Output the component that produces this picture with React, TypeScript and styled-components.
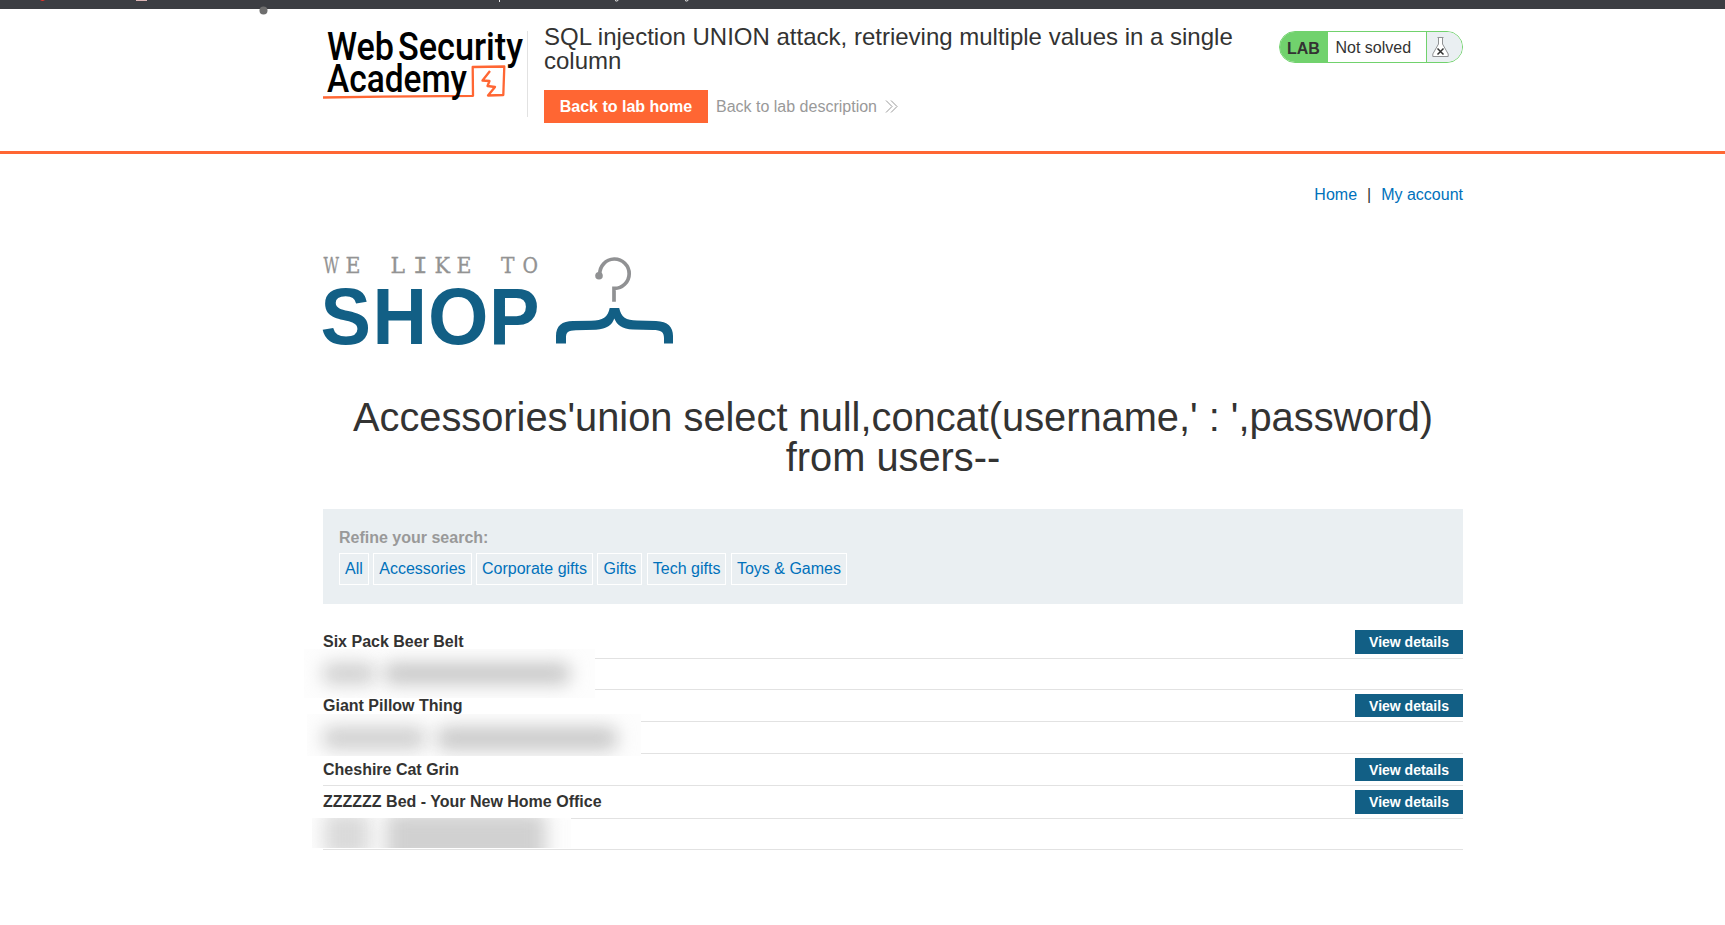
import React from 'react';
import styled, { createGlobalStyle } from 'styled-components';

const GlobalStyle = createGlobalStyle`
  * { box-sizing: border-box; }
  body {
    margin: 0;
    background: #fff;
    color: #333332;
    font-family: 'Liberation Sans', Arial, Helvetica, sans-serif;
    font-size: 16px;
  }
  #root { height: 925px; overflow: hidden; }
  a { text-decoration: none; }
  h1, h2 { margin: 0; font-weight: 400; }
`;

const BrowserStrip = styled.div`
  position: relative;
  height: 9px;
  background: #3c3e43;
`;

const StripSvg = styled.svg`
  display: block;
  overflow: visible;
`;

const Container = styled.div`
  width: 1140px;
  margin-left: 323px;
`;

const Header = styled.header`
  height: 145px;
  border-bottom: 3px solid #ff6633;
`;

const HeaderRow = styled(Container)`
  display: flex;
  align-items: flex-start;
  padding-top: 16px;
`;

const LogoCell = styled.div`
  width: 205px;
  height: 86px;
  margin-top: 6px;
  border-right: 1px solid #e2e2e2;
`;

const AcademySvg = styled.svg`
  display: block;
  overflow: visible;
`;

const TitleCell = styled.div`
  width: 720px;
  padding-left: 16px;
`;

const LabTitle = styled.h2`
  font-size: 24px;
  line-height: 24px;
`;

const Actions = styled.div`
  display: flex;
  align-items: center;
  gap: 8px;
  margin-top: 17px;
`;

const HomeButton = styled.a`
  width: 164px;
  height: 33px;
  line-height: 33px;
  text-align: center;
  background: #ff6633;
  color: #fff;
  font-weight: 700;
`;

const DescriptionLink = styled.a`
  display: flex;
  align-items: center;
  gap: 8px;
  color: #999;
`;

const StatusPill = styled.div`
  display: flex;
  width: 184px;
  height: 32px;
  margin: 6px 0 0 auto;
  border: 1px solid #71d26d;
  border-radius: 16px;
  overflow: hidden;
  line-height: 30px;
`;

const PillLabel = styled.span`
  width: 48px;
  padding: 2px 0 0 7px;
  background: #71d26d;
  font-weight: 700;
`;

const PillState = styled.span`
  flex: 1;
  padding: 1px 0 0 7.5px;
`;

const PillIcon = styled.span`
  width: 36px;
  padding: 5px 0 0 5px;
  border-left: 1px solid #71d26d;
  background: #eaeff2;
  line-height: 0;
`;

const Nav = styled.nav`
  display: flex;
  justify-content: flex-end;
  gap: 10px;
  padding-top: 31px;
  line-height: 20px;
`;

const NavLink = styled.a`
  color: #0071bb;
`;

const ShopLogo = styled.svg`
  display: block;
  margin-top: 51px;
  overflow: visible;
`;

const PageTitle = styled.h1`
  margin-top: 51px;
  font-size: 39.8px;
  line-height: 40px;
  text-align: center;
`;

const Filters = styled.section`
  height: 95px;
  margin-top: 32px;
  padding: 19px 16px 0;
  background: #eaeff2;
`;

const FilterLabel = styled.div`
  line-height: 20px;
  color: #999;
  font-weight: 700;
`;

const TagList = styled.div`
  display: flex;
  gap: 4.5px;
  margin-top: 5px;
`;

const Tag = styled.a`
  height: 32px;
  padding: 0 5px;
  border: 1px solid #fff;
  line-height: 30px;
  color: #0071bb;
`;

const Results = styled.div`
  margin-top: 22px;
`;

const Row = styled.div<{ $height: number }>`
  position: relative;
  display: flex;
  align-items: flex-start;
  justify-content: space-between;
  height: ${(p) => p.$height}px;
  padding-top: 4px;
  border-bottom: 1px solid #e2e2e2;
`;

const ItemName = styled.span`
  line-height: 24px;
  font-weight: 700;
`;

const DetailsButton = styled.a<{ $height: number }>`
  width: 108px;
  height: ${(p) => p.$height}px;
  line-height: 24px;
  background: #125f85;
  color: #fff;
  font-size: 14px;
  font-weight: 700;
  text-align: center;
`;

const Redaction = styled.div<{ $x: number; $y: number; $w: number; $h: number }>`
  position: absolute;
  z-index: 1;
  left: ${(p) => p.$x}px;
  top: ${(p) => p.$y}px;
  width: ${(p) => p.$w}px;
  height: ${(p) => p.$h}px;
  overflow: hidden;
  background: #fdfdfd;
`;

const Smudge = styled.i<{ $x: number; $y: number; $w: number; $h: number; $c: string }>`
  position: absolute;
  left: ${(p) => p.$x}px;
  top: ${(p) => p.$y}px;
  width: ${(p) => p.$w}px;
  height: ${(p) => p.$h}px;
  border-radius: 8px;
  background: ${(p) => p.$c};
  filter: blur(9px);
`;

type Blot = { x: number; y: number; w: number; h: number; c: string };
type Mask = { x: number; y: number; w: number; h: number; blots: Blot[] };
type Item = { name?: string; height: number; button?: number; mask?: Mask };

const items: Item[] = [
  { name: 'Six Pack Beer Belt', height: 33, button: 24 },
  {
    height: 31,
    mask: {
      x: -19, y: -10, w: 291, h: 49,
      blots: [
        { x: 19, y: 14, w: 52, h: 21, c: '#cecece' },
        { x: 80, y: 14, w: 186, h: 21, c: '#c6c6c6' },
      ],
    },
  },
  { name: 'Giant Pillow Thing', height: 32, button: 23 },
  {
    height: 32,
    mask: {
      x: -16, y: -8, w: 334, h: 42,
      blots: [
        { x: 16, y: 13, w: 102, h: 22, c: '#cecece' },
        { x: 130, y: 13, w: 180, h: 23, c: '#c8c8c8' },
      ],
    },
  },
  { name: 'Cheshire Cat Grin', height: 32, button: 23 },
  { name: 'ZZZZZZ Bed - Your New Home Office', height: 33, button: 24 },
  {
    height: 31,
    mask: {
      x: -11, y: -1, w: 259, h: 30,
      blots: [
        { x: 12, y: -6, w: 46, h: 46, c: '#dadada' },
        { x: 74, y: -6, w: 160, h: 54, c: '#d1d1d1' },
      ],
    },
  },
];

const tags = ['All', 'Accessories', 'Corporate gifts', 'Gifts', 'Tech gifts', 'Toys & Games'];

const AcademyLogo = () => (
  <AcademySvg width="202" height="74" viewBox="0 0 202 74">
    <path
      d="M0 66.500 L60 65.600 L150 64.800 L149.700 36 L181.300 35.500 L180.300 64 L165 64.500 L172 56 L164.500 55 L166.500 50 L159.500 49.500 L167 40"
      fill="none"
      stroke="#ff6633"
      strokeWidth="2.300"
      strokeLinejoin="round"
    />
    <g fontFamily="Roboto, sans-serif" fontWeight="500" fontSize="38.5" fill="#000">
      <text x="4" y="29" textLength="67" lengthAdjust="spacingAndGlyphs">Web</text>
      <text x="75" y="29" textLength="125" lengthAdjust="spacingAndGlyphs">Security</text>
      <text x="4" y="61" textLength="140" lengthAdjust="spacingAndGlyphs">Academy</text>
    </g>
  </AcademySvg>
);

type Slab = { letter: string; x: number; w: number; mono?: boolean };

const slabs: Slab[] = [
  { letter: 'W', x: 0.5, w: 15.5 },
  { letter: 'E', x: 22.5, w: 15 },
  { letter: 'L', x: 67.5, w: 14.5 },
  { letter: 'I', x: 90, w: 14.5, mono: true },
  { letter: 'K', x: 111.5, w: 15.5 },
  { letter: 'E', x: 133.5, w: 15 },
  { letter: 'T', x: 178, w: 13.5 },
  { letter: 'O', x: 199.5, w: 15.5 },
];

const HangerLogo = () => (
  <ShopLogo width="351" height="90" viewBox="0 0 351 90">
    <g fill="#939393" stroke="#939393" strokeWidth="0.300">
      {slabs.map((s) => (
        <text
          key={s.x}
          x={s.x}
          y="17"
          fontFamily={s.mono ? "'Liberation Mono', monospace" : "'DejaVu Serif', serif"}
          fontSize={s.mono ? 24 : 21.5}
          textLength={s.w}
          lengthAdjust="spacingAndGlyphs"
        >
          {s.letter}
        </text>
      ))}
    </g>
    <g fontFamily="'Liberation Sans', Arial, sans-serif" fontWeight="700" fontSize="80.500" fill="#125f85">
      <text x="-2.500" y="87.700" textLength="50.500" lengthAdjust="spacingAndGlyphs">S</text>
      <text x="49.600" y="87.700" textLength="54.500" lengthAdjust="spacingAndGlyphs">H</text>
      <text x="105" y="87.700" textLength="60.500" lengthAdjust="spacingAndGlyphs">O</text>
      <text x="166" y="87.700" textLength="50.500" lengthAdjust="spacingAndGlyphs">P</text>
    </g>
    <circle cx="276" cy="19.700" r="3.800" fill="#909193" />
    <path d="M276.800 18.500 A14.700 14.700 0 1 1 291 32.400 V45.700" fill="none" stroke="#909193" strokeWidth="3.700" />
    <path
      d="M286.700 52 H296.200 C298 61 303 64.500 314 64.500 L333 65 C345 65.500 350 71 350 80 V87.500 H341 V82 C341 76 338 74 330 74 L310 73.500 C299 73 294 69 291.300 62.500 C289 69 284 73 273 73.700 L253 74.300 C245 74.500 243 76 243 82 V87.500 H233 V80 C233 70 239 65 250 65 L268 64.700 C280 64.500 285 61 286.700 52 Z"
      fill="#125f85"
    />
  </ShopLogo>
);

const FlaskIcon = () => (
  <svg width="17" height="20" viewBox="0 0 17 20" fill="none">
    <path d="M5.500 .500 H11.500 M6.500 .500 V7 L.800 17 V19.500 H16.200 V17 L10.500 7 V.500" fill="#fff" stroke="#909294" />
    <path d="M5.500 11.500 L11.500 17.500 M11.500 11.500 L5.500 17.500" stroke="#333" strokeWidth="1.500" />
  </svg>
);

const ChevronsIcon = () => (
  <svg width="13" height="13" viewBox="0 0 13 13" fill="none" stroke="#999">
    <path d="M1 .500 L7 6.500 L1 12.500 M6 .500 L12 6.500 L6 12.500" />
  </svg>
);

export default function App() {
  return (
    <>
      <GlobalStyle />
      <BrowserStrip>
        <StripSvg width="700" height="9" viewBox="0 0 700 9">
          <path d="M40 0 H45 L43 1 H42 Z" fill="#e0352b" />
          <path d="M136 0 H147 V1 H136 Z" fill="#dcb5b5" />
          <path d="M499.500 0 V2 M615 0.500 Q617 2 618.500 0 M685 0.500 Q687 2 688.500 0" fill="none" stroke="#e5e5e5" />
          <circle cx="263.500" cy="10.500" r="4" fill="#6e6e6e" />
        </StripSvg>
      </BrowserStrip>
      <Header>
        <HeaderRow>
          <LogoCell>
            <AcademyLogo />
          </LogoCell>
          <TitleCell>
            <LabTitle>SQL injection UNION attack, retrieving multiple values in a single column</LabTitle>
            <Actions>
              <HomeButton>Back to lab home</HomeButton>
              <DescriptionLink>
                Back to lab description
                <ChevronsIcon />
              </DescriptionLink>
            </Actions>
          </TitleCell>
          <StatusPill>
            <PillLabel>LAB</PillLabel>
            <PillState>Not solved</PillState>
            <PillIcon>
              <FlaskIcon />
            </PillIcon>
          </StatusPill>
        </HeaderRow>
      </Header>
      <Container as="main">
        <Nav>
          <NavLink>Home</NavLink>
          <span>|</span>
          <NavLink>My account</NavLink>
        </Nav>
        <HangerLogo />
        <PageTitle>Accessories'union select null,concat(username,' : ',password) from users--</PageTitle>
        <Filters>
          <FilterLabel>Refine your search:</FilterLabel>
          <TagList>
            {tags.map((t) => (
              <Tag key={t}>{t}</Tag>
            ))}
          </TagList>
        </Filters>
        <Results>
          {items.map((item, i) => (
            <Row key={i} $height={item.height}>
              {item.name && <ItemName>{item.name}</ItemName>}
              {item.button && <DetailsButton $height={item.button}>View details</DetailsButton>}
              {item.mask && (
                <Redaction $x={item.mask.x} $y={item.mask.y} $w={item.mask.w} $h={item.mask.h}>
                  {item.mask.blots.map((b) => (
                    <Smudge key={b.x} $x={b.x} $y={b.y} $w={b.w} $h={b.h} $c={b.c} />
                  ))}
                </Redaction>
              )}
            </Row>
          ))}
        </Results>
      </Container>
    </>
  );
}
